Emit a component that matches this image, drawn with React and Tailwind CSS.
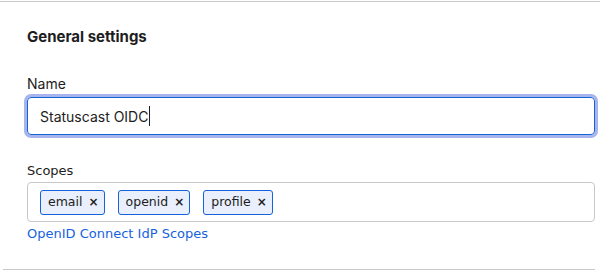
import React from 'react';

const Chip = ({ label }) => (
  <span className="flex items-center h-[25px] pl-[7px] pr-[5px] gap-[6px] rounded-[3px] border border-[#1662dd] bg-[#e9effc] text-[12.5px] text-[#1d1d21] font-['DejaVu_Sans',sans-serif]">
    {label}
    <span className="text-[12px] font-bold text-[#1d1d21]">×</span>
  </span>
);

export default function App() {
  return (
    <div className="w-[600px] h-[272px] bg-white flex flex-col font-['Inter',sans-serif] text-[#1d1d21]">
      <div className="mt-px border-t border-[#c9c9c9]" />

      <div className="flex flex-col pl-[27px] pr-[5px]">
        <h2 className="mt-[25px] h-5 leading-5 text-[15px] font-bold">General settings</h2>

        <label className="mt-[27px] h-5 leading-5 text-[14px]">Name</label>
        <div className="mt-[3px] h-[38px] flex items-center px-[12px] rounded-[4px] border border-[#1662dd] ring-[3px] ring-[#a8b5ec] text-[14px]">
          Statuscast OIDC
          <span className="ml-px w-px h-[20px] bg-[#1d1d21]" />
        </div>

        <label className="mt-[26px] h-5 leading-5 text-[13px] font-['DejaVu_Sans',sans-serif]">Scopes</label>
        <div className="mt-[1px] h-[40px] flex items-center gap-[13px] px-[12px] rounded-[4px] border border-[#c8c8c8]">
          <Chip label="email" />
          <Chip label="openid" />
          <Chip label="profile" />
        </div>

        <a className="mt-[2px] h-5 leading-5 text-[13px] text-[#1662dd] font-['DejaVu_Sans',sans-serif]">
          OpenID Connect IdP Scopes
        </a>
      </div>

      <div className="mt-auto mb-[2px] ml-[3px] mr-[5px] border-t border-[#c9c9c9]" />
    </div>
  );
}
